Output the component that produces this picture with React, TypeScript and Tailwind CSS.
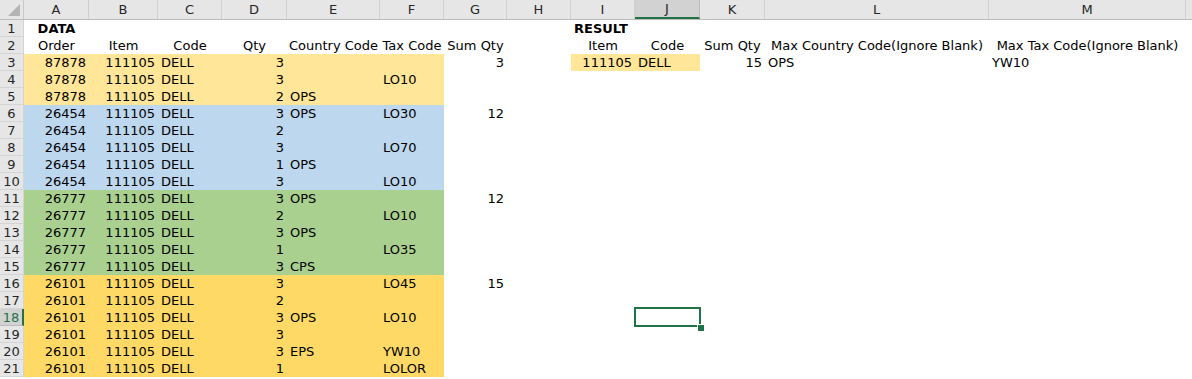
import React from 'react';

const COLS = ['A', 'B', 'C', 'D', 'E', 'F', 'G', 'H', 'I', 'J', 'K', 'L', 'M'];
const GRID = 'grid grid-cols-[24px_65px_69px_64px_65px_93px_64px_63px_64px_64px_65px_65px_224px_197px_1fr]';

type Cell = { v?: string; align?: 'l' | 'r' | 'c'; bold?: boolean; fill?: string };

const FILL_LIGHT = 'bg-[#ffe699]';
const FILL_BLUE = 'bg-[#bdd7ee]';
const FILL_GREEN = 'bg-[#a9d08e]';
const FILL_GOLD = 'bg-[#ffd966]';

// order, qty, country, tax, sum qty, fill
const data: Array<[string, string, string, string, string, string]> = [
  ['87878', '3', '', '', '3', FILL_LIGHT],
  ['87878', '3', '', 'LO10', '', FILL_LIGHT],
  ['87878', '2', 'OPS', '', '', FILL_LIGHT],
  ['26454', '3', 'OPS', 'LO30', '12', FILL_BLUE],
  ['26454', '2', '', '', '', FILL_BLUE],
  ['26454', '3', '', 'LO70', '', FILL_BLUE],
  ['26454', '1', 'OPS', '', '', FILL_BLUE],
  ['26454', '3', '', 'LO10', '', FILL_BLUE],
  ['26777', '3', 'OPS', '', '12', FILL_GREEN],
  ['26777', '2', '', 'LO10', '', FILL_GREEN],
  ['26777', '3', 'OPS', '', '', FILL_GREEN],
  ['26777', '1', '', 'LO35', '', FILL_GREEN],
  ['26777', '3', 'CPS', '', '', FILL_GREEN],
  ['26101', '3', '', 'LO45', '15', FILL_GOLD],
  ['26101', '2', '', '', '', FILL_GOLD],
  ['26101', '3', 'OPS', 'LO10', '', FILL_GOLD],
  ['26101', '3', '', '', '', FILL_GOLD],
  ['26101', '3', 'EPS', 'YW10', '', FILL_GOLD],
  ['26101', '1', '', 'LOLOR', '', FILL_GOLD],
];

function buildRows(): Cell[][] {
  const rows: Cell[][] = [];
  const empty = (): Cell[] => COLS.map(() => ({}));

  const r1 = empty();
  r1[0] = { v: 'DATA', align: 'c', bold: true };
  r1[8] = { v: 'RESULT', align: 'l', bold: true };
  rows.push(r1);

  const r2 = empty();
  ['Order', 'Item', 'Code', 'Qty', 'Country Code', 'Tax Code', 'Sum Qty'].forEach((h, i) => {
    r2[i] = { v: h, align: 'c' };
  });
  r2[8] = { v: 'Item', align: 'c' };
  r2[9] = { v: 'Code', align: 'c' };
  r2[10] = { v: 'Sum Qty', align: 'c' };
  r2[11] = { v: 'Max Country Code(Ignore Blank)', align: 'c' };
  r2[12] = { v: 'Max Tax Code(Ignore Blank)', align: 'c' };
  rows.push(r2);

  data.forEach(([order, qty, country, tax, sum, fill], idx) => {
    const r = empty();
    r[0] = { v: order, align: 'r', fill };
    r[1] = { v: '111105', align: 'r', fill };
    r[2] = { v: 'DELL', align: 'l', fill };
    r[3] = { v: qty, align: 'r', fill };
    r[4] = { v: country, align: 'l', fill };
    r[5] = { v: tax, align: 'l', fill };
    r[6] = { v: sum, align: 'r' };
    if (idx === 0) {
      r[8] = { v: '111105', align: 'r', fill: FILL_LIGHT };
      r[9] = { v: 'DELL', align: 'l', fill: FILL_LIGHT };
      r[10] = { v: '15', align: 'r' };
      r[11] = { v: 'OPS', align: 'l' };
      r[12] = { v: 'YW10', align: 'l' };
    }
    rows.push(r);
  });
  return rows;
}

export default function App() {
  const rows = buildRows();

  return (
    <div className="w-[1192px] h-[379px] overflow-hidden bg-white text-[13px] text-black font-['DejaVu_Sans',sans-serif]">
      {/* column headers */}
      <div className={`${GRID} h-[20px] bg-[#e6e6e6] border-b border-[#bcbcbc]`}>
        <div className="relative border-r border-[#c8c8c8]">
          <div className="absolute right-[3px] bottom-[3px] w-0 h-0 border-l-[12px] border-l-transparent border-b-[12px] border-b-[#b4b4b4]" />
        </div>
        {COLS.map((c) => (
          <div
            key={c}
            className={
              c === 'J'
                ? 'flex items-center justify-center bg-[#d2d2d2] border-r border-[#bcbcbc] border-b-2 border-b-[#217346] text-[#262626] text-[13px] leading-none'
                : 'flex items-center justify-center border-r border-[#d0d0d0] text-[#262626] text-[13px] leading-none'
            }
          >
            {c}
          </div>
        ))}
        <div />
      </div>

      {/* rows */}
      {rows.map((row, ri) => {
        const n = ri + 1;
        return (
          <div key={n} className={`${GRID} h-[17px]`}>
            <div
              className={
                n === 18
                  ? 'flex items-center justify-center bg-[#d2d2d2] border-r-2 border-r-[#217346] border-b border-[#bcbcbc] text-[#217346] text-[13px] leading-none'
                  : 'flex items-center justify-center bg-[#e6e6e6] border-r border-[#bcbcbc] border-b border-[#d4d4d4] text-[#262626] text-[13px] leading-none'
              }
            >
              {n}
            </div>
            {row.map((cell, ci) => {
              const selected = n === 18 && ci === 9;
              return (
                <div
                  key={ci}
                  className={[
                    'relative flex items-center whitespace-nowrap leading-[17px] px-[3px]',
                    cell.align === 'r' ? 'justify-end' : cell.align === 'c' ? 'justify-center' : 'justify-start',
                    cell.fill ?? '',
                    cell.bold ? 'font-bold' : '',
                    selected ? 'overflow-visible z-30' : cell.align === 'l' || cell.bold ? 'overflow-visible z-10' : 'overflow-hidden',
                  ].join(' ')}
                >
                  <span className="whitespace-nowrap">{cell.v}</span>
                  {selected && (
                    <>
                      <div className="absolute -left-[1px] -top-[2px] w-[67px] h-[20px] border-2 border-[#217346] pointer-events-none" />
                      <div className="absolute right-[-5px] bottom-[-6px] w-[8px] h-[8px] bg-[#217346] border border-white" />
                    </>
                  )}
                </div>
              );
            })}
            <div />
          </div>
        );
      })}
    </div>
  );
}
